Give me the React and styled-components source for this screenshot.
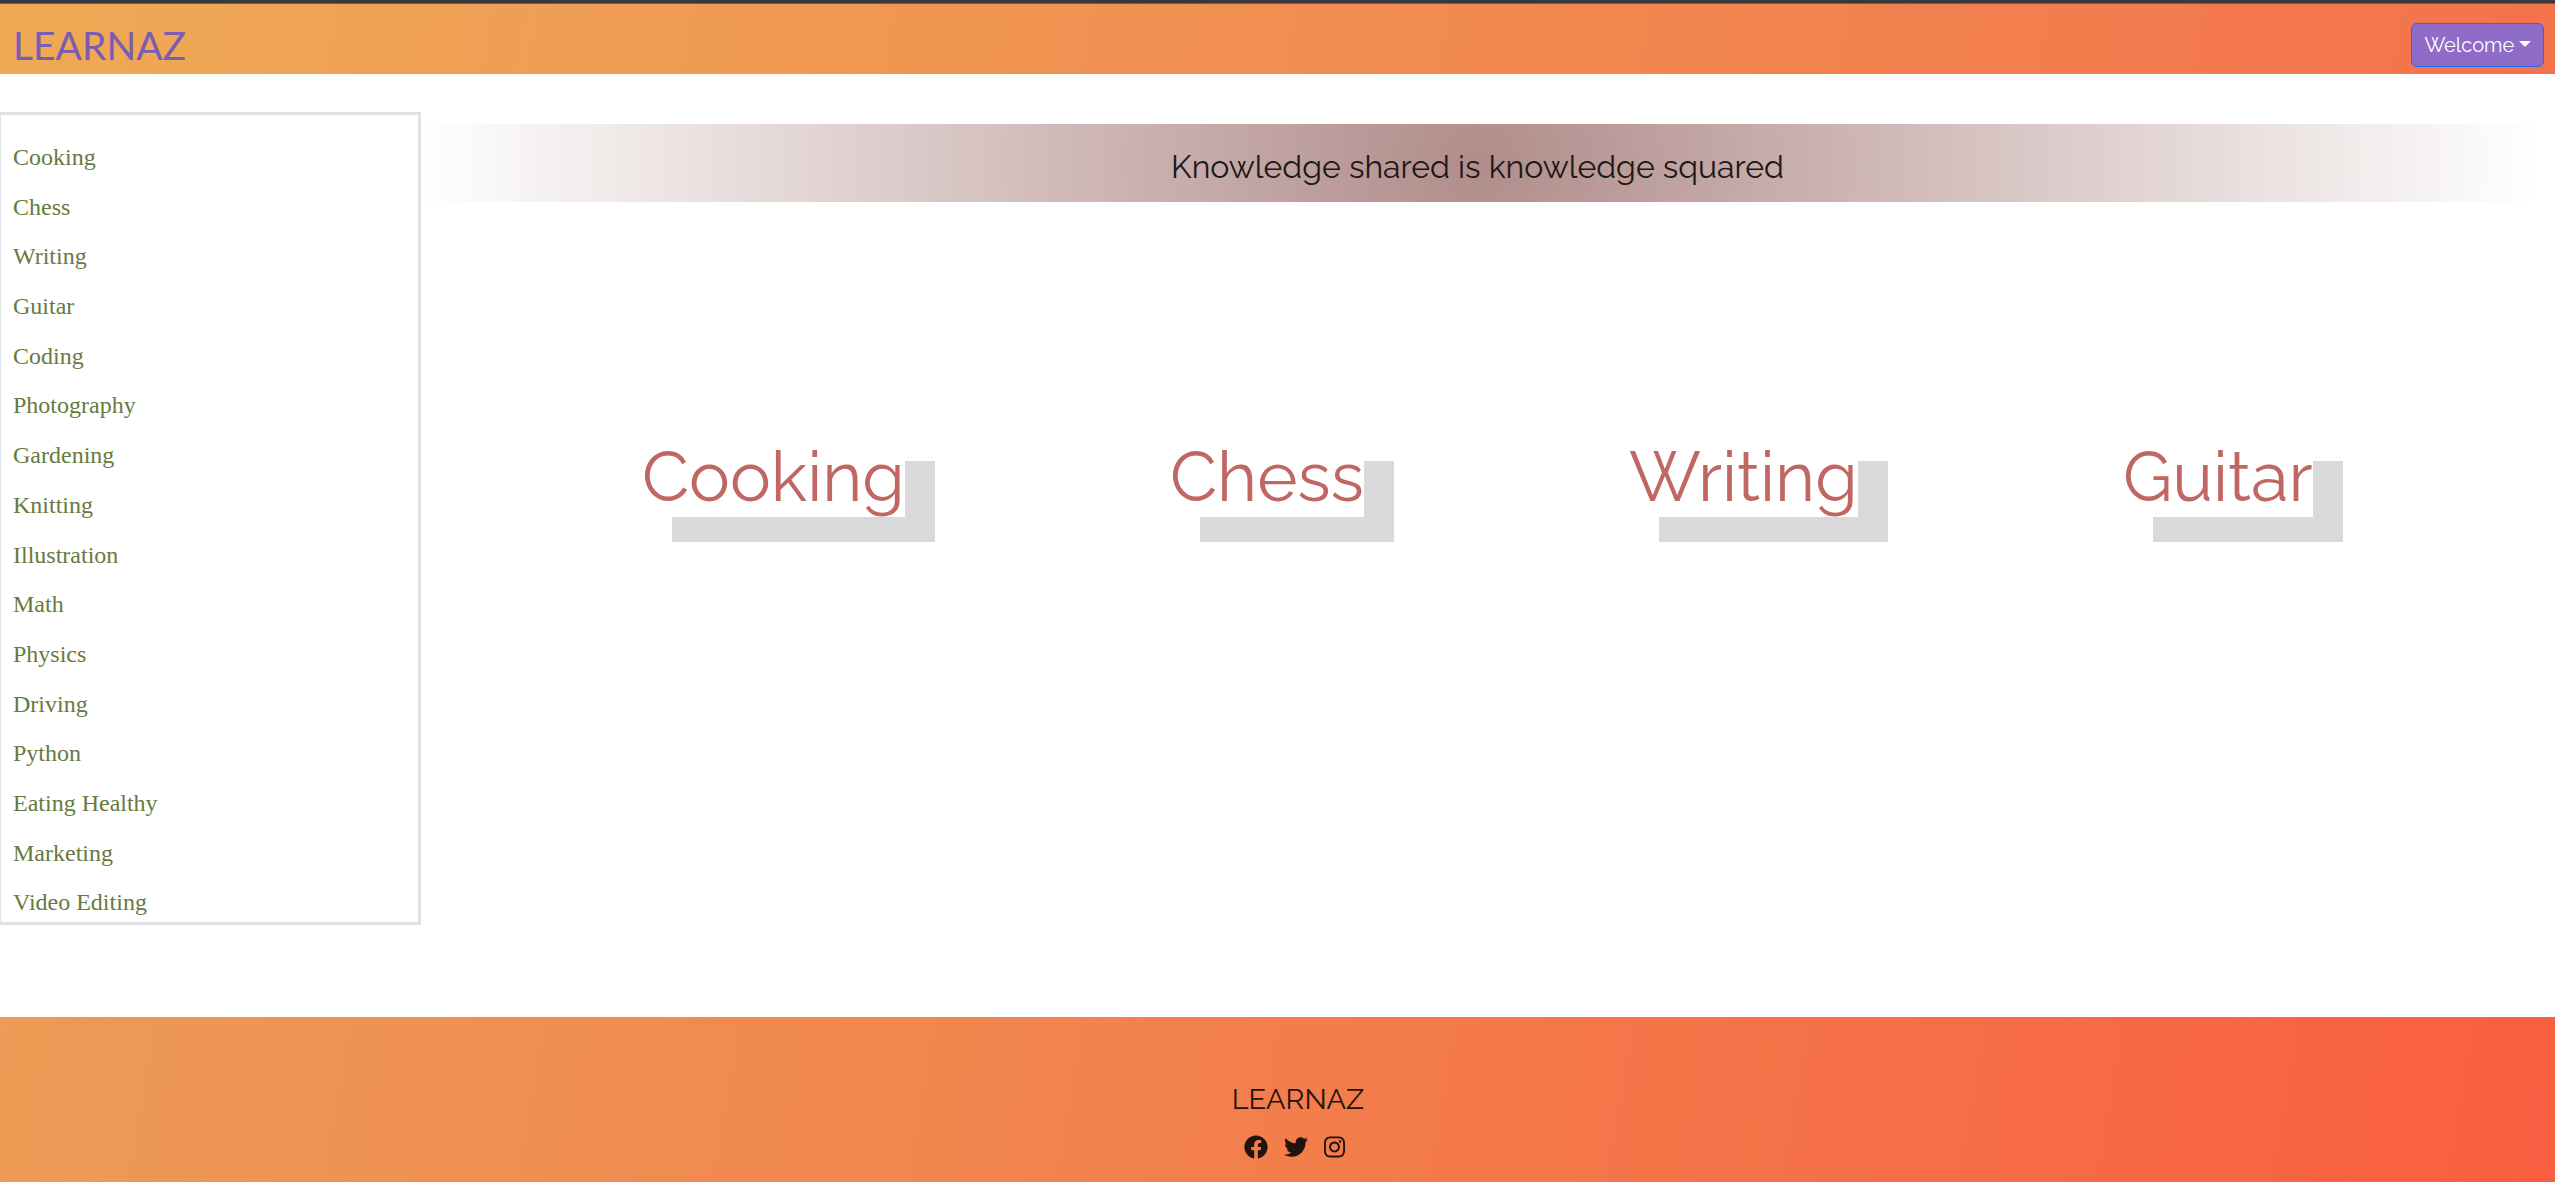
import React from 'react';
import styled, { createGlobalStyle } from 'styled-components';
import { FaFacebook, FaTwitter, FaInstagram } from 'react-icons/fa';

const GlobalStyle = createGlobalStyle`
  *, *::before, *::after { box-sizing: border-box; }
  body { margin: 0; background: #fff; overflow: hidden; font-family: Raleway, Lato, sans-serif; }
`;

const Page = styled.div`
  display: flex;
  flex-direction: column;
  height: 1182px;
`;

const Header = styled.header`
  display: flex;
  justify-content: space-between;
  align-items: center;
  height: 74px;
  flex: none;
  padding: 16px 11px 0 13px;
  border-top: 3px solid #38383d;
  box-shadow: inset 0 1px 0 #66635f;
  background: linear-gradient(100deg, #eeaa55, #f4724c);
`;

const Brand = styled.a`
  margin-top: -4px;
  font-family: Lato, sans-serif;
  font-size: 39px;
  line-height: 52px;
  color: #7a5cb0;
`;

const DropdownButton = styled.button`
  display: flex;
  align-items: center;
  gap: 5px;
  width: 133px;
  height: 44px;
  margin-top: -3px;
  padding: 0 12px 0 12.5px;
  border: 1px solid #1f6cf5;
  border-radius: 6px;
  background: #8e6cc8;
  color: #fff;
  font: 400 20px Raleway, Lato, sans-serif;
`;

const Caret = styled.span`
  margin-top: -2px;
  border: 6px solid transparent;
  border-top-color: #fff;
  border-bottom: 0;
`;

const Body = styled.div`
  display: flex;
  flex: 1;
  align-items: flex-start;
  padding-top: 38px;
`;

const Sidebar = styled.nav`
  flex: none;
  width: 423px;
  height: 813px;
  margin-left: -2px;
  padding: 18px 12px 0;
  border: 3px solid #dee2e6;
  overflow: hidden;
`;

const TopicLink = styled.a`
  display: block;
  height: 49.7px;
  line-height: 49.7px;
  font-family: "Liberation Serif", serif;
  font-size: 24px;
  color: #667a40;
`;

const Main = styled.main`
  flex: 1;
  padding-top: 12px;
`;

const Banner = styled.h2`
  margin: 0 0 234px;
  height: 78px;
  padding: 4px 21px 0 0;
  line-height: 78px;
  text-align: center;
  font-size: 32px;
  font-weight: 400;
  color: #1b1918;
  background: radial-gradient(circle 1060px at calc(50% - 10.5px) 50%, #b18d8b, #fff);
`;

const Features = styled.div`
  display: flex;
  justify-content: space-between;
  padding: 0 242px 0 221px;
`;

const Feature = styled.a`
  width: ${(p) => p.$width}px;
  height: 81px;
  line-height: 82px;
  font-size: 68.7px;
  white-space: nowrap;
  color: #c06663;
  box-shadow: 30px 25px 0 #d9d9d9;
`;

const Footer = styled.footer`
  display: flex;
  flex-direction: column;
  align-items: center;
  flex: none;
  height: 165px;
  padding-top: 64px;
  padding-left: 41px;
  color: #21140e;
  background: linear-gradient(100deg, #ed9b56, #f37e4c 50%, #f95e41);
`;

const FooterTitle = styled.div`
  font-size: 28.8px;
  line-height: 36px;
`;

const Socials = styled.div`
  display: flex;
  gap: 16px;
  margin-top: 18px;
  margin-right: 7px;
  font-size: 24px;
  svg { display: block; }
  svg:last-child { width: 21px; }
`;

const topics = ['Cooking', 'Chess', 'Writing', 'Guitar', 'Coding', 'Photography', 'Gardening', 'Knitting',
  'Illustration', 'Math', 'Physics', 'Driving', 'Python', 'Eating Healthy', 'Marketing', 'Video Editing'];

const features = [
  { name: 'Cooking', width: 263 },
  { name: 'Chess', width: 194 },
  { name: 'Writing', width: 229 },
  { name: 'Guitar', width: 190 },
];

export default function App() {
  return (
    <Page>
      <GlobalStyle />
      <Header>
        <Brand>LEARNAZ</Brand>
        <DropdownButton>Welcome<Caret /></DropdownButton>
      </Header>
      <Body>
        <Sidebar>
          {topics.map((t) => <TopicLink key={t}>{t}</TopicLink>)}
        </Sidebar>
        <Main>
          <Banner>Knowledge shared is knowledge squared</Banner>
          <Features>
            {features.map((f) => (
              <Feature key={f.name} $width={f.width}>{f.name}</Feature>
            ))}
          </Features>
        </Main>
      </Body>
      <Footer>
        <FooterTitle>LEARNAZ</FooterTitle>
        <Socials><FaFacebook /><FaTwitter /><FaInstagram /></Socials>
      </Footer>
    </Page>
  );
}
